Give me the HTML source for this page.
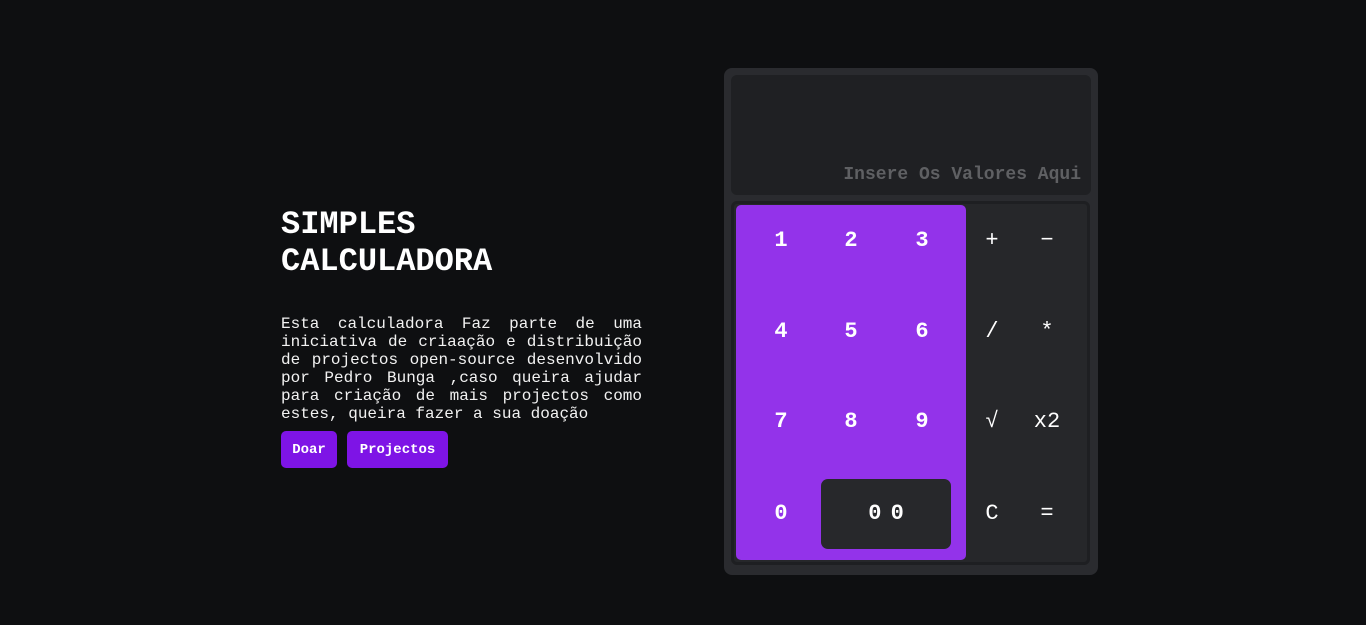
<!DOCTYPE html>
<html><head><meta charset="utf-8"><style>
*{margin:0;padding:0;box-sizing:border-box}
body{width:1366px;height:625px;background:#0e0f11;position:relative;overflow:hidden;font-family:"Liberation Mono",monospace;color:#fff}
.title{position:absolute;left:281px;top:206px;font-size:32px;font-weight:bold;line-height:37px;color:#fff}
.para{position:absolute;left:281px;top:315px;width:361px;font-size:16px;line-height:18px;text-align:justify;color:#f2f2f2}
.btn{position:absolute;top:431px;height:37px;background:#7e14e6;border-radius:5px;font-size:14px;font-weight:bold;display:flex;align-items:center;justify-content:center;color:#fff}
.outer{position:absolute;left:724px;top:68px;width:374px;height:507px;background:#2a2b2f;border-radius:8px}
.disp{position:absolute;left:731px;top:75px;width:360px;height:120px;background:#1f2023;border-radius:6px}
.ph{position:absolute;right:10px;bottom:10px;font-size:18px;font-weight:bold;color:#5f6063}
.pad{position:absolute;left:731px;top:201px;width:359px;height:364px;background:#26272a;border:3px solid #1e1f22;border-radius:6px}
.purple{position:absolute;left:736px;top:205px;width:230px;height:355px;background:#9333ea;border-radius:5px}
.zz{position:absolute;left:821px;top:479px;width:130px;height:70px;background:#27282b;border-radius:7px}
.k{position:absolute;width:60px;height:30px;margin-left:-30px;margin-top:-14px;text-align:center;line-height:30px;font-family:"Liberation Mono",monospace;font-weight:bold;font-size:22px;color:#fff}
.o{font-weight:normal;font-size:22px}
</style></head><body>
<div class="title">SIMPLES<br>CALCULADORA</div>
<div class="para">Esta calculadora Faz parte de uma iniciativa de criaação e distribuição de projectos open-source desenvolvido por Pedro Bunga ,caso queira ajudar para criação de mais projectos como estes, queira fazer a sua doação</div>
<div class="btn" style="left:281px;width:56px">Doar</div>
<div class="btn" style="left:347px;width:101px">Projectos</div>
<div class="outer"></div>
<div class="disp"><div class="ph">Insere Os Valores Aqui</div></div>
<div class="pad"></div>
<div class="purple"></div>
<div class="zz"></div>
<div class="k" style="left:781px;top:240px">1</div>
<div class="k" style="left:851px;top:240px">2</div>
<div class="k" style="left:922px;top:240px">3</div>
<div class="k" style="left:781px;top:331px">4</div>
<div class="k" style="left:851px;top:331px">5</div>
<div class="k" style="left:922px;top:331px">6</div>
<div class="k" style="left:781px;top:421px">7</div>
<div class="k" style="left:851px;top:421px">8</div>
<div class="k" style="left:922px;top:421px">9</div>
<div class="k" style="left:781px;top:513px">0</div>
<div class="k" style="left:886px;top:513px;width:80px;margin-left:-40px;word-spacing:-4px">0 0</div>
<div class="k o" style="left:992px;top:240px">+</div>
<div class="k o" style="left:1047px;top:240px">−</div>
<div class="k o" style="left:992px;top:331px">/</div>
<div class="k o" style="left:1047px;top:331px">*</div>
<div class="k o" style="left:992px;top:421px">√</div>
<div class="k o" style="left:1047px;top:421px">x2</div>
<div class="k o" style="left:992px;top:513px">C</div>
<div class="k o" style="left:1047px;top:513px">=</div>
</body></html>
